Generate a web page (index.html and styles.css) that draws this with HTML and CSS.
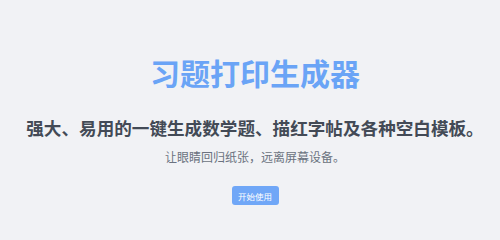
FILE: index.html
```html
<!DOCTYPE html>
<html lang="zh-CN">
<head>
<meta charset="utf-8">
<title>习题打印生成器</title>
<link rel="stylesheet" href="styles.css">
</head>
<body>
<main class="hero">
  <h1 class="title">习题打印生成器</h1>
  <p class="lead">强大、易用的一键生成数学题、描红字帖及各种空白模板。</p>
  <p class="sub">让眼睛回归纸张，远离屏幕设备。</p>
  <button class="cta">开始使用</button>
</main>
</body>
</html>
```
FILE: styles.css
```css
html, body {
  margin: 0;
  padding: 0;
  background: #f1f2f5;
  font-family: "Noto Sans CJK SC", "Noto Sans", sans-serif;
}
.hero {
  display: flex;
  flex-direction: column;
  align-items: center;
  padding: 52px 0 0 10px;
}
.title {
  margin: 0;
  font-size: 30px;
  line-height: 40px;
  font-weight: 700;
  color: #6aa4f6;
}
.lead {
  margin: 24px 0 0;
  font-size: 17.6px;
  line-height: 24px;
  font-weight: 700;
  color: #434a56;
}
.sub {
  margin: 9px 0 0;
  font-size: 12px;
  line-height: 16px;
  color: #6b7280;
}
.cta {
  margin-top: 21px;
  width: 47px;
  height: 19px;
  padding: 0;
  border: none;
  border-radius: 3px;
  background: #70a7f7;
  color: #fff;
  font-family: inherit;
  font-size: 8.5px;
}
```
